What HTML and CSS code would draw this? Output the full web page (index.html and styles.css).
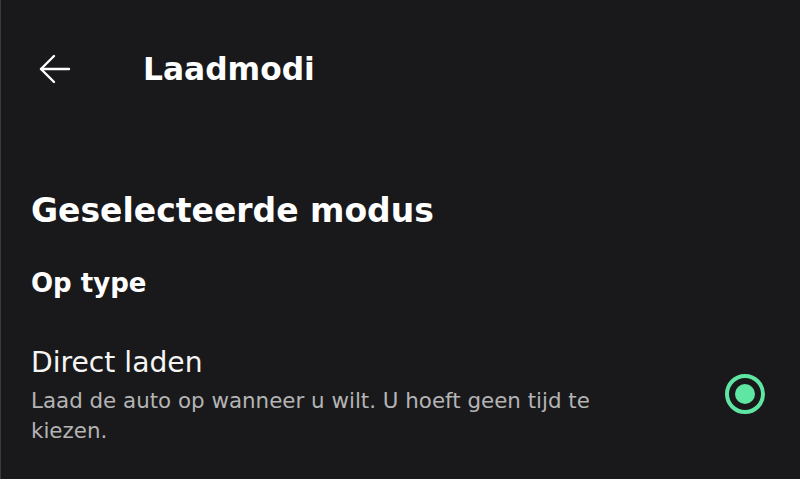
FILE: index.html
```html
<!DOCTYPE html>
<html lang="nl">
<head>
<meta charset="utf-8">
<title>Laadmodi</title>
<link rel="stylesheet" href="styles.css">
</head>
<body>
<div class="screen">
  <header class="topbar">
    <button class="back" aria-label="Terug">
      <svg width="32" height="30" viewBox="0 0 32 30" fill="none" stroke="#fff" stroke-width="2.4" stroke-linecap="round" stroke-linejoin="round">
        <path d="M2 15 H30"/>
        <path d="M15 2 L2 15 L15 28"/>
      </svg>
    </button>
    <h1 class="title">Laadmodi</h1>
  </header>
  <main class="content">
    <h2 class="section">Geselecteerde modus</h2>
    <h3 class="group">Op type</h3>
    <div class="option">
      <div class="option-text">
        <div class="option-title">Direct laden</div>
        <div class="option-desc">Laad de auto op wanneer u wilt. U hoeft geen tijd te kiezen.</div>
      </div>
      <span class="radio"><span class="dot"></span></span>
    </div>
  </main>
</div>
</body>
</html>
```
FILE: styles.css
```css
* { box-sizing: border-box; }
html, body {
  margin: 0;
  padding: 0;
  background: #19191b;
}
.screen {
  width: 800px;
  height: 479px;
  background: #19191b;
  border-left: 1px solid #3a3a3c;
  color: #fff;
  font-family: "DejaVu Sans", "Noto Sans", sans-serif;
  overflow: hidden;
}
.topbar {
  display: flex;
  align-items: center;
  height: 138px;
  padding-left: 38px;
}
.back {
  background: none;
  border: 0;
  padding: 0;
  width: 32px;
  height: 30px;
  display: flex;
}
.title {
  margin: 0 0 0 72px;
  font-size: 31.3px;
  line-height: 40px;
  font-weight: 700;
}
.content {
  padding: 53px 0 0 30px;
}
.section {
  margin: 0;
  font-size: 33px;
  font-weight: 700;
  line-height: 40px;
}
.group {
  margin: 36px 0 0;
  font-size: 26px;
  font-weight: 700;
  line-height: 32px;
}
.option {
  display: flex;
  align-items: center;
  margin-top: 46px;
  padding-right: 35px;
}
.option-text {
  width: 600px;
}
.option-title {
  font-size: 28.2px;
  line-height: 36px;
  color: #f5f5f5;
}
.option-desc {
  margin-top: 5px;
  font-size: 21.4px;
  line-height: 30px;
  color: #b4b4b4;
}
.radio {
  margin-left: auto;
  margin-top: -3px;
  width: 40px;
  height: 40px;
  border: 4px solid #5fe6a2;
  border-radius: 50%;
  display: flex;
  align-items: center;
  justify-content: center;
}
.dot {
  width: 20px;
  height: 20px;
  border-radius: 50%;
  background: #5fe6a2;
}
```
